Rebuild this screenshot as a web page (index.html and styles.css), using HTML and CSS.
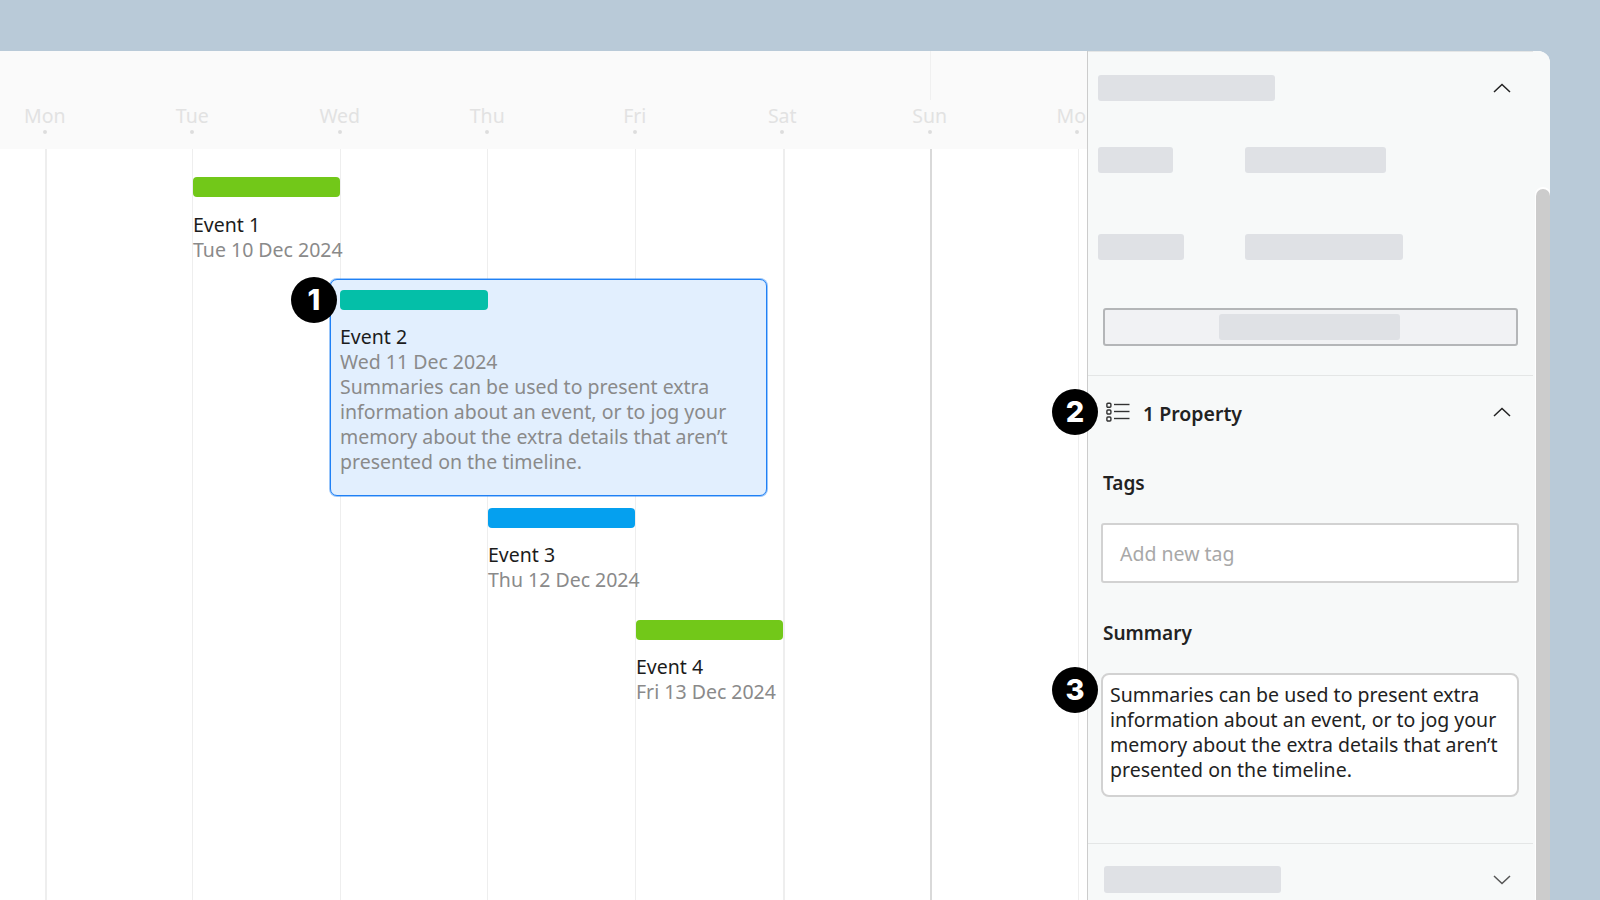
FILE: index.html
```html
<!DOCTYPE html>
<html lang="en">
<head>
  <meta charset="UTF-8">
  <title>Timeline</title>
  <link rel="stylesheet" href="styles.css">
</head>
<body>
  <div class="app">
    <div class="timeline">
      <div class="day-head">
        <div class="day"><span>Mon</span><i></i></div>
        <div class="day"><span>Tue</span><i></i></div>
        <div class="day"><span>Wed</span><i></i></div>
        <div class="day"><span>Thu</span><i></i></div>
        <div class="day"><span>Fri</span><i></i></div>
        <div class="day"><span>Sat</span><i></i></div>
        <div class="day sun"><span>Sun</span><i></i></div>
        <div class="day"><span>Mon</span><i></i></div>
      </div>
      <div class="day-lines">
        <div class="line wide"></div>
        <div class="line"></div>
        <div class="line"></div>
        <div class="line"></div>
        <div class="line"></div>
        <div class="line wide"></div>
        <div class="line sun"></div>
        <div class="line"></div>
      </div>

      <div class="event event-1">
        <div class="bar green"></div>
        <div class="event-title">Event 1</div>
        <div class="event-text">Tue 10 Dec 2024</div>
      </div>
      <div class="event event-2">
        <div class="bar teal"></div>
        <div class="event-title">Event 2</div>
        <div class="event-text">Wed 11 Dec 2024<br>Summaries can be used to present extra<br>information about an event, or to jog your<br>memory about the extra details that aren’t<br>presented on the timeline.</div>
      </div>
      <div class="event event-3">
        <div class="bar blue"></div>
        <div class="event-title">Event 3</div>
        <div class="event-text">Thu 12 Dec 2024</div>
      </div>
      <div class="event event-4">
        <div class="bar green"></div>
        <div class="event-title">Event 4</div>
        <div class="event-text">Fri 13 Dec 2024</div>
      </div>
    </div>

    <div class="sidebar">
      <section class="section section-top">
        <div class="section-head">
          <div class="skel skel-title"></div>
          <svg class="chevron" width="18" height="10" viewBox="0 0 18 10"><polyline points="1,9 9,1.5 17,9"/></svg>
        </div>
        <div class="field-grid">
          <div class="skel skel-b"></div>
          <div class="skel skel-c"></div>
          <div class="skel skel-d"></div>
          <div class="skel skel-e"></div>
        </div>
        <div class="fake-button"><div class="skel skel-button"></div></div>
      </section>

      <section class="section section-props">
        <div class="section-head">
          <div class="props-title">
            <svg class="list-icon" width="24" height="20" viewBox="0 0 24 20">
              <rect x="0.9" y="1.2" width="4" height="4" rx="1"/>
              <rect x="0.9" y="8" width="4" height="4" rx="1"/>
              <rect x="0.9" y="15" width="4" height="4" rx="1"/>
              <line x1="8" y1="2.5" x2="23.5" y2="2.5"/>
              <line x1="8" y1="9.5" x2="23.5" y2="9.5"/>
              <line x1="8" y1="16.5" x2="23.5" y2="16.5"/>
            </svg>
            <span>1 Property</span>
          </div>
          <svg class="chevron" width="18" height="10" viewBox="0 0 18 10"><polyline points="1,9 9,1.5 17,9"/></svg>
        </div>
        <div class="field-label label-tags">Tags</div>
        <div class="tag-input">Add new tag</div>
        <div class="field-label label-summary">Summary</div>
        <div class="summary-box">Summaries can be used to present extra<br>information about an event, or to jog your<br>memory about the extra details that aren’t<br>presented on the timeline.</div>
      </section>

      <section class="section-bottom">
        <div class="skel skel-bottom"></div>
        <svg class="chevron light" width="18" height="10" viewBox="0 0 18 10"><polyline points="1,1 9,8.5 17,1"/></svg>
      </section>

      <div class="scrollbar"></div>
    </div>

    <div class="badge badge-1">1</div>
    <div class="badge badge-2">2</div>
    <div class="badge badge-3">3</div>
  </div>
</body>
</html>
```

FILE: styles.css
```css
/* Base */
body {
  margin: 0;
  height: 900px;
  overflow: hidden;
  background-color: #b9cad8;
  font-family: "Noto Sans", sans-serif;
  font-size: 19.5px;
  line-height: 25px;
  color: #222222;
}

.app {
  position: relative;
  display: flex;
  width: 1550px;
  height: 849px;
  margin-top: 51px;
  overflow: hidden;
  border-top-right-radius: 12px;
  background-color: #ffffff;
}

/* Timeline */
.timeline {
  position: relative;
  flex: none;
  width: 1087px;
  overflow: hidden;
}

.day-head {
  display: flex;
  height: 98px;
  background-color: #fafafa;
}

.day {
  position: relative;
  flex: none;
  width: 147.5px;
  box-sizing: border-box;
  padding-top: 52px;
  text-align: center;
  color: #e2e2e2;
  transform: translateX(-29px);
}

.day span {
  display: block;
}

.day i {
  display: block;
  width: 4px;
  height: 4px;
  margin: 2px auto 0;
  border-radius: 50%;
  background-color: #dddddd;
}

.day.sun::before {
  content: "";
  position: absolute;
  top: 0;
  left: 74px;
  height: 49px;
  border-left: 1px solid #f0f0f0;
}

.day-lines {
  display: flex;
  height: 751px;
  padding-left: 44.7px;
}

.line {
  flex: none;
  width: 147.6px;
  box-sizing: border-box;
  border-left: 1px solid #eeeeee;
}

.line.wide {
  border-left: 2px solid #eeeeee;
}

.line.sun {
  border-left: 2px solid #d9d9d9;
}

/* Events */
.event {
  position: absolute;
}

.event-1 {
  top: 126px;
  left: 193px;
}

.event-1 .bar {
  margin-bottom: 15px;
}

.event-2 {
  top: 228px;
  left: 330px;
  width: 437px;
  height: 217px;
  box-sizing: border-box;
  padding: 9px;
  border: 1px solid #1f80f5;
  border-radius: 7px;
  background-color: #e2effe;
  box-shadow: 0 0 0 1px rgba(31, 128, 245, 0.45);
}

.event-2 .bar {
  width: 148px;
  margin-top: 1px;
}

.event-3 {
  top: 457px;
  left: 488px;
}

.event-4 {
  top: 569px;
  left: 636px;
}

.bar {
  width: 147px;
  height: 20px;
  margin-bottom: 14px;
  border-radius: 4px;
}

.green {
  background-color: #72c819;
}

.teal {
  background-color: #04bfa8;
}

.blue {
  background-color: #05a0ef;
}

.event-title {
  color: #1c1c1c;
}

.event-text {
  color: #8a8a8a;
  white-space: nowrap;
}

/* Sidebar */
.sidebar {
  position: relative;
  flex: none;
  width: 463px;
  box-sizing: border-box;
  padding-right: 17px;
  border-left: 1px solid #cccccc;
  background-color: #f7f9f9;
}

.section {
  box-sizing: border-box;
  border-bottom: 1px solid #e4e6e6;
}

.section-top {
  height: 325px;
  padding: 23px 0 0 10px;
  border-top: 1px solid #e4e6e6;
}

.section-head {
  display: flex;
  align-items: center;
  justify-content: space-between;
  height: 26px;
  padding-right: 22px;
}

.chevron {
  fill: none;
  stroke: #222222;
  stroke-width: 1.5;
}

.chevron.light {
  stroke: #555555;
}

.skel {
  border-radius: 3px;
  background-color: #dfe1e5;
}

.skel-title {
  width: 177px;
  height: 26px;
}

.field-grid {
  display: grid;
  grid-template-columns: 147px 1fr;
  row-gap: 61px;
  margin-top: 46px;
}

.skel-b {
  width: 75px;
  height: 26px;
}

.skel-c {
  width: 141px;
  height: 26px;
}

.skel-d {
  width: 86px;
  height: 26px;
}

.skel-e {
  width: 158px;
  height: 26px;
}

.fake-button {
  display: flex;
  justify-content: center;
  align-items: center;
  width: 415px;
  height: 38px;
  box-sizing: border-box;
  margin: 48px 0 0 5px;
  border: 2px solid #b4b6b8;
  border-radius: 3px;
  background-color: #f1f2f4;
}

.skel-button {
  width: 181px;
  height: 26px;
  margin-left: -2px;
}

.section-props {
  height: 468px;
  padding: 23px 0 0 15px;
}

.props-title {
  display: flex;
  align-items: center;
  gap: 13px;
  margin-left: 3px;
  font-weight: 600;
}

.props-title span {
  margin-top: 2px;
}

.list-icon {
  fill: none;
  stroke: #333333;
  stroke-width: 1.4;
}

.field-label {
  font-size: 19px;
  font-weight: 600;
}

.label-tags {
  margin-top: 46px;
}

.tag-input {
  width: 418px;
  height: 60px;
  box-sizing: border-box;
  margin: 27px 0 0 -2px;
  padding: 16px 17px;
  border: 2px solid #d2d2d2;
  border-radius: 3px;
  background-color: #ffffff;
  color: #a8a8a8;
}

.label-summary {
  margin-top: 38px;
}

.summary-box {
  width: 418px;
  height: 124px;
  box-sizing: border-box;
  margin: 27px 0 0 -2px;
  padding: 7px;
  border: 2px solid #d2d2d2;
  border-radius: 8px;
  background-color: #ffffff;
  white-space: nowrap;
}

.section-bottom {
  display: flex;
  align-items: center;
  justify-content: space-between;
  padding: 22px 22px 0 16px;
}

.skel-bottom {
  width: 177px;
  height: 27px;
}

.scrollbar {
  position: absolute;
  top: 138px;
  right: 0;
  width: 14px;
  height: 720px;
  border-radius: 7px 7px 0 0;
  background-color: #cccccc;
  box-shadow: 0 -1px 0 1px #ffffff;
}

/* Numbered callouts */
.badge {
  position: absolute;
  width: 46px;
  height: 46px;
  border-radius: 50%;
  background-color: #000000;
  color: #ffffff;
  font-family: Inter, sans-serif;
  font-size: 29px;
  font-weight: 800;
  line-height: 46px;
  text-align: center;
}

.badge-1 {
  top: 226px;
  left: 291px;
}

.badge-2 {
  top: 338px;
  left: 1052px;
}

.badge-3 {
  top: 616px;
  left: 1052px;
}
```
